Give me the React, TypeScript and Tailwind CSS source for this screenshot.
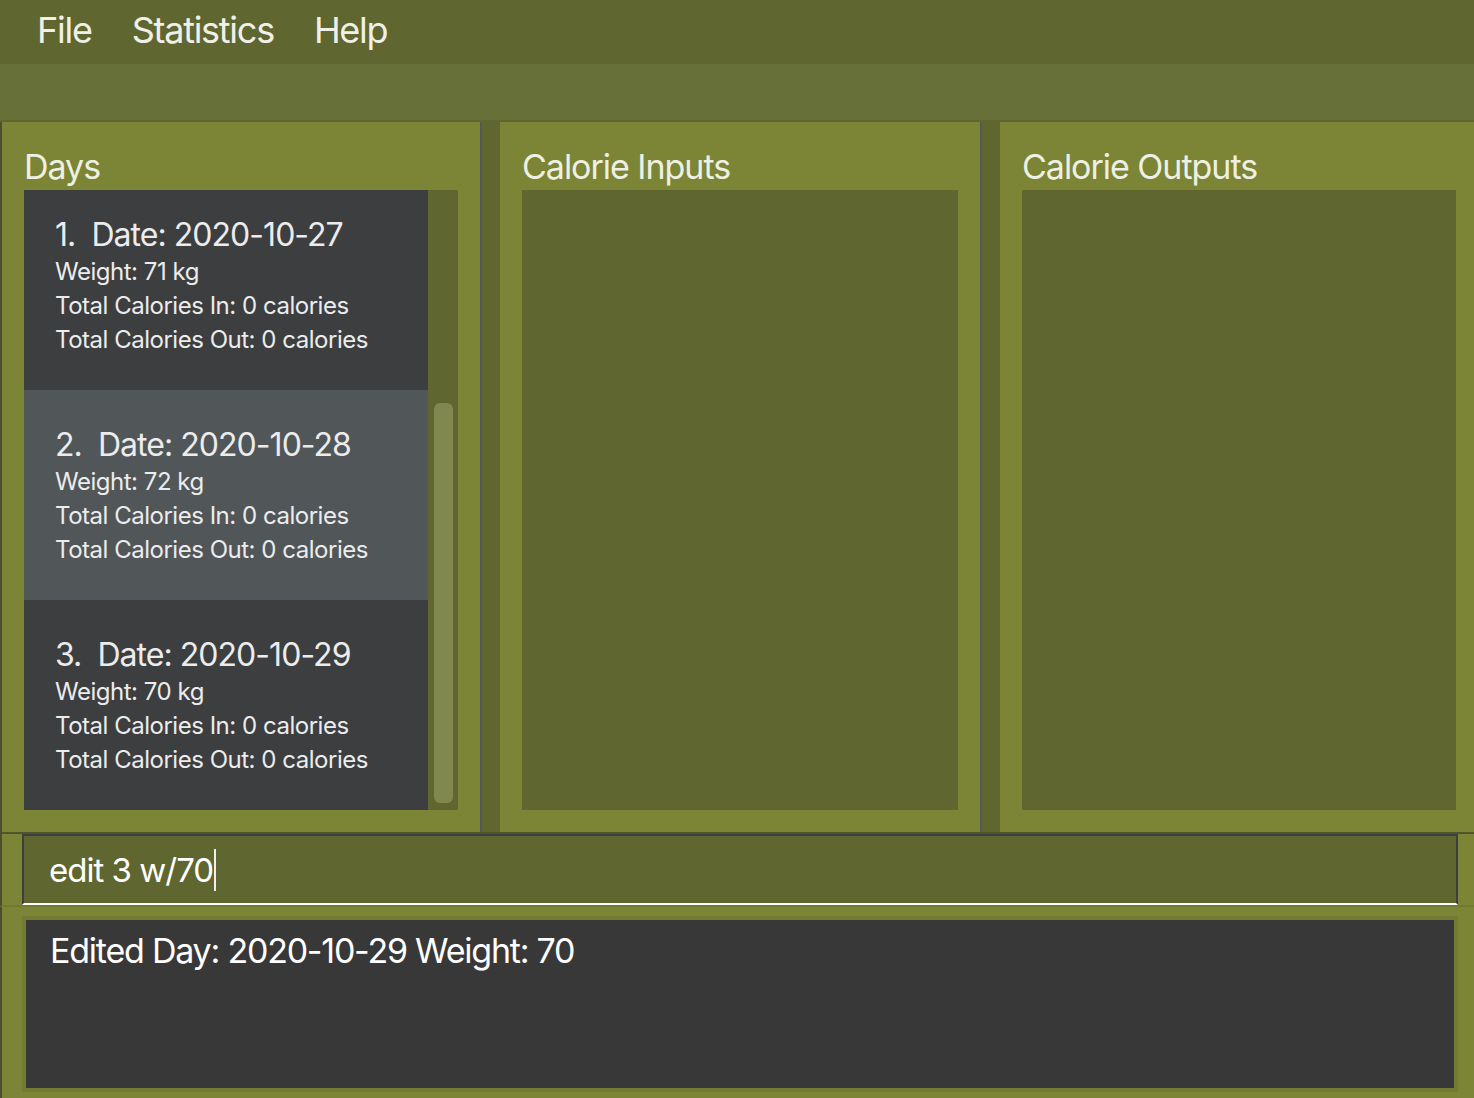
import React from 'react';

type Day = { index: number; date: string; weight: number; calIn: number; calOut: number };

const days: Day[] = [
  { index: 1, date: '2020-10-27', weight: 71, calIn: 0, calOut: 0 },
  { index: 2, date: '2020-10-28', weight: 72, calIn: 0, calOut: 0 },
  { index: 3, date: '2020-10-29', weight: 70, calIn: 0, calOut: 0 },
];

const DayCard = ({ day, selected }: { day: Day; selected: boolean }) => (
  <div className={`h-[210px] pt-[39px] pl-[31px] text-[#ececec] ${selected ? 'bg-[#515659]' : 'bg-[#3c3e40]'}`}>
    <div className="text-[32px] leading-[32px] mb-[4px] whitespace-pre tracking-[-0.03em]">
      {day.index}.  Date: {day.date}
    </div>
    <div className="text-[24px] leading-[34px] tracking-[-0.02em]">Weight: {day.weight} kg</div>
    <div className="text-[24px] leading-[34px] tracking-[-0.02em]">Total Calories In: {day.calIn} calories</div>
    <div className="text-[24px] leading-[34px] tracking-[-0.02em]">Total Calories Out: {day.calOut} calories</div>
  </div>
);

const PanelTitle = ({ children }: { children: React.ReactNode }) => (
  <div className="h-[68px] pt-[28px] text-[34px] leading-[34px] tracking-[-0.03em] text-[#eef0e4]">{children}</div>
);

const Divider = () => <div className="w-[20px] h-full border-l-2 border-[#55585a] bg-[#5f6630]" />;

export default function App() {
  return (
    <div
      className="w-[1474px] h-[1098px] bg-[#7b8535] overflow-hidden"
      style={{ fontFamily: 'Inter, "Noto Sans", sans-serif' }}
    >
      {/* menu */}
      <div className="h-[64px] bg-[#5f6630] flex items-start pt-[12px] pl-[37px] gap-[40px] text-[36px] leading-[36px] tracking-[-0.035em] text-[#f0f0e8]">
        <span>File</span>
        <span>Statistics</span>
        <span>Help</span>
      </div>
      <div className="h-[58px] bg-[#68703a] border-b-2 border-[#5f6630]" />

      {/* panels */}
      <div className="h-[710px] flex border-l-2 border-[#4b4f2c]">
        <div className="w-[478px] h-full pl-[22px] pr-[22px]">
          <PanelTitle>Days</PanelTitle>
          <div className="h-[620px] flex bg-[#5f6630]">
            <div className="w-[404px] h-full overflow-hidden">
              <div className="-mt-[10px]">
                {days.map((d) => (
                  <DayCard key={d.index} day={d} selected={d.index === 2} />
                ))}
              </div>
            </div>
            <div className="flex-1 h-full pt-[213px] pl-[6px] pr-[5px] pb-[7px]">
              <div className="h-full rounded-[6px] bg-[#80884f]" />
            </div>
          </div>
        </div>
        <Divider />
        <div className="w-[480px] h-full px-[22px]">
          <PanelTitle>Calorie Inputs</PanelTitle>
          <div className="h-[620px] bg-[#5f6630]" />
        </div>
        <Divider />
        <div className="flex-1 h-full pl-[22px] pr-[18px]">
          <PanelTitle>Calorie Outputs</PanelTitle>
          <div className="h-[620px] bg-[#5f6630]" />
        </div>
      </div>

      {/* command box */}
      <div className="h-[75px] border-t-2 border-[#4f552a] border-l-2 border-l-[#4b4f2c] border-b-2 border-b-[#737b32] pl-[20px]">
        <div className="w-[1436px] h-full bg-[#5f6630] border-t-2 border-l-2 border-r-2 border-[#3c3e40] border-b-2 border-b-white flex items-center pl-[25px] text-white text-[33px] leading-[36px] tracking-[-0.03em]">
          <span className="whitespace-pre">edit 3 w/70</span>
          <span className="inline-block w-[2px] h-[42px] bg-[#f0f0f0] ml-[1px]" />
        </div>
      </div>

      {/* result box */}
      <div className="pt-[9px] pl-[20px] border-l-2 border-[#4b4f2c] h-[192px]">
        <div className="w-[1436px] h-[176px] border-4 border-[#737b32] bg-[#383838] pt-[14px] pl-[24px] text-white text-[34px] leading-[34px] tracking-[-0.036em]">
          Edited Day: 2020-10-29 Weight: 70
        </div>
      </div>
    </div>
  );
}
